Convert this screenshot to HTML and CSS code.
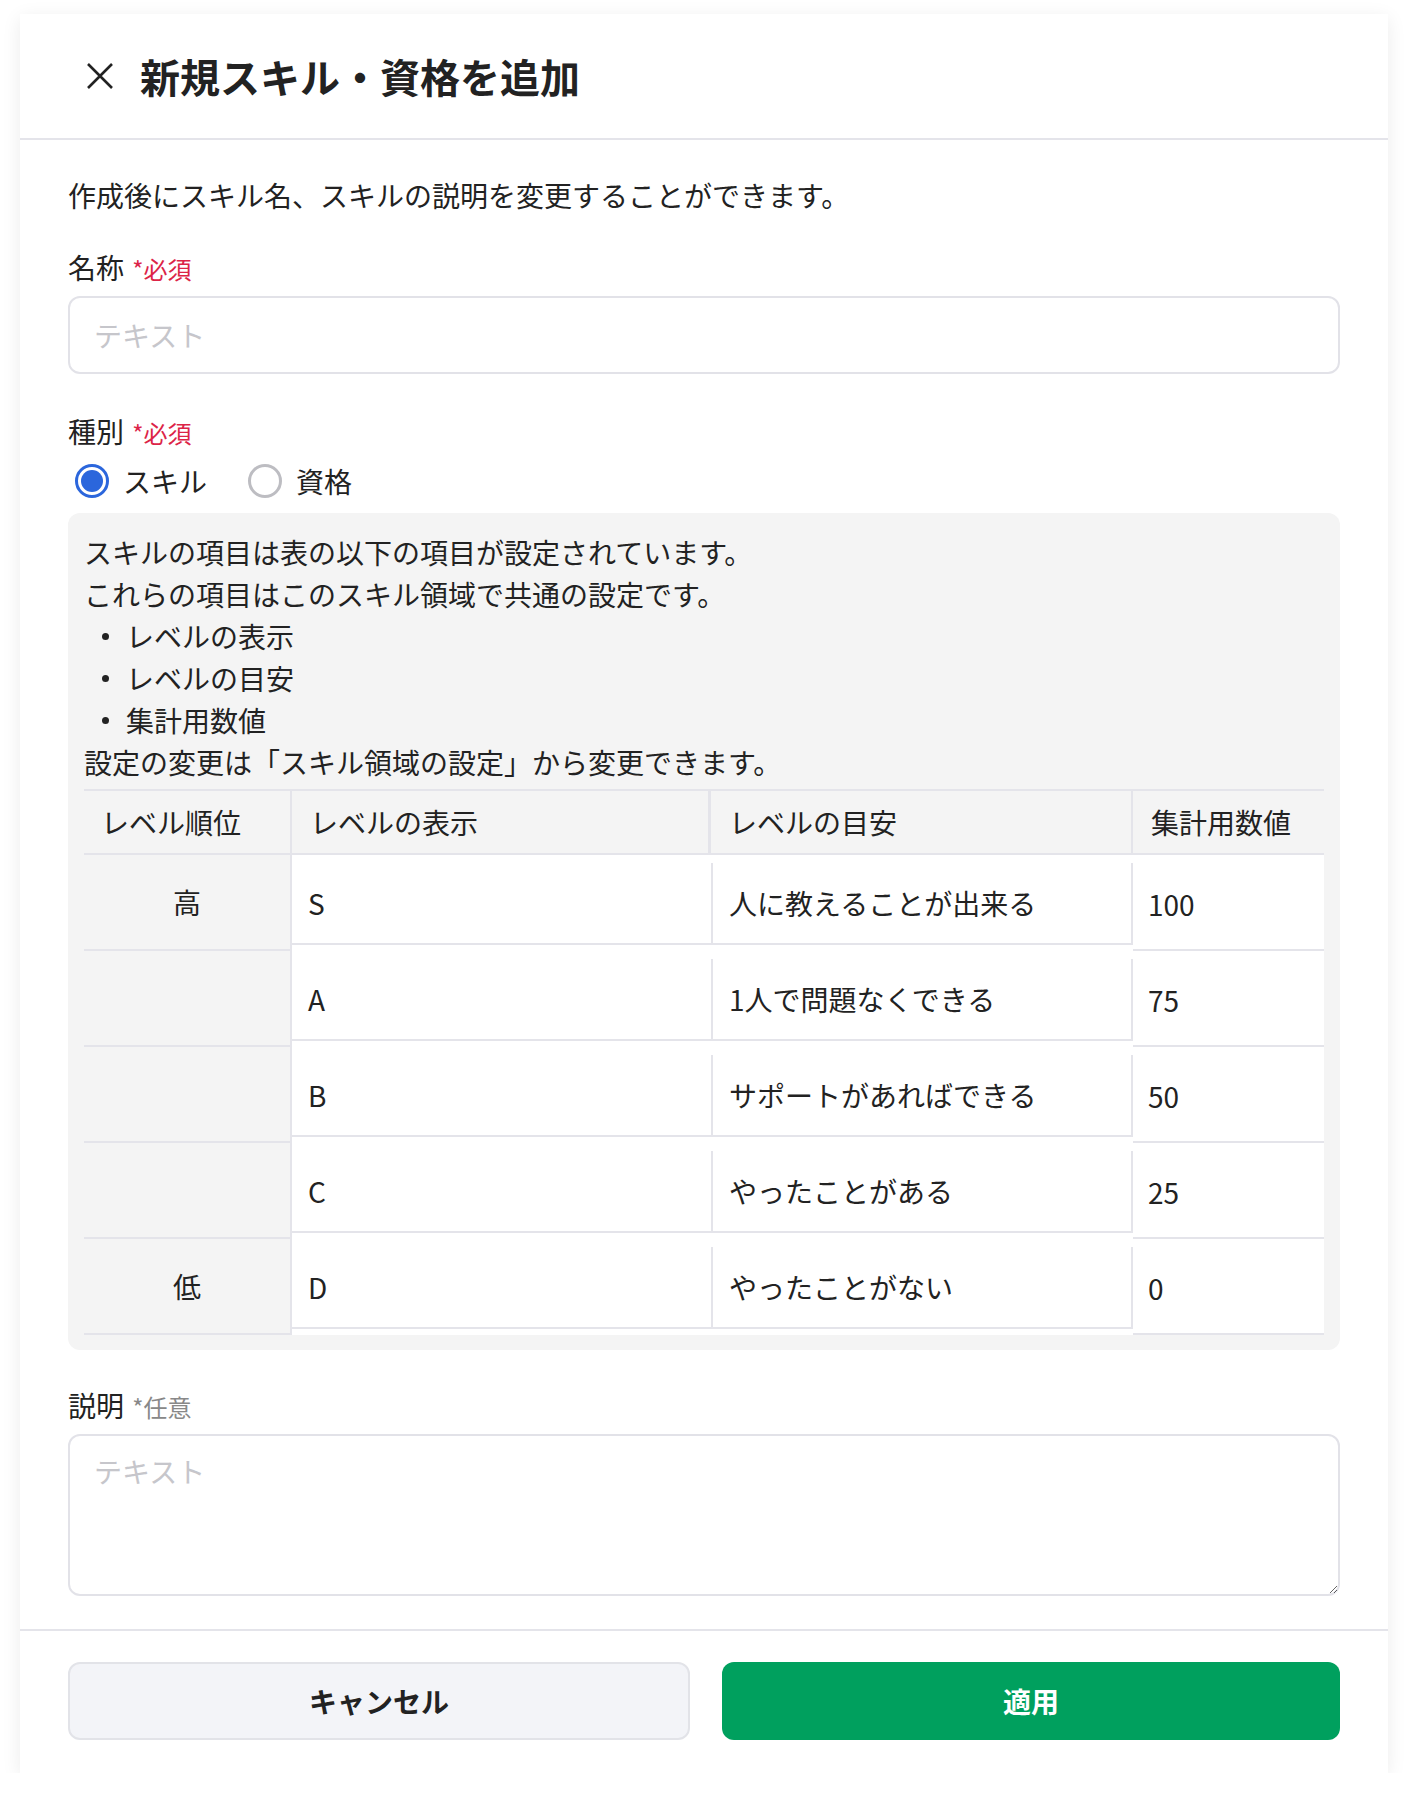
FILE: index.html
```html
<!DOCTYPE html>
<html lang="ja">
<head>
  <meta charset="UTF-8">
  <title>新規スキル・資格を追加</title>
  <link rel="stylesheet" href="styles.css">
</head>
<body>

  <div class="dialog">
    <div class="dialog-header">
      <button class="close-btn" aria-label="閉じる">
        <svg width="28" height="28" viewBox="0 0 28 28">
          <path d="M2 2 L26 26 M26 2 L2 26" stroke="#222" stroke-width="2.6" fill="none"/>
        </svg>
      </button>
      <h1>新規スキル・資格を追加</h1>
    </div>

    <div class="dialog-body">
      <p class="lead">作成後にスキル名、スキルの説明を変更することができます。</p>

      <label class="field-label label-name">名称 <span class="req">*必須</span></label>
      <input class="text-input" type="text" placeholder="テキスト">

      <label class="field-label label-kind">種別 <span class="req">*必須</span></label>
      <div class="radios">
        <label class="radio-opt"><span class="radio checked"></span>スキル</label>
        <label class="radio-opt"><span class="radio"></span>資格</label>
      </div>

      <div class="info-box">
        <p>スキルの項目は表の以下の項目が設定されています。<br>これらの項目はこのスキル領域で共通の設定です。</p>
        <ul>
          <li>レベルの表示</li>
          <li>レベルの目安</li>
          <li>集計用数値</li>
        </ul>
        <p>設定の変更は「スキル領域の設定」から変更できます。</p>

        <div class="level-table">
          <div class="th th-rank">レベル順位</div>
          <div class="th th-disp">レベルの表示</div>
          <div class="th th-guide">レベルの目安</div>
          <div class="th th-val">集計用数値</div>

          <div class="rank">高</div>
          <div class="disp"><div class="inner">S</div></div>
          <div class="guide"><div class="inner">人に教えることが出来る</div></div>
          <div class="val">100</div>

          <div class="rank"></div>
          <div class="disp"><div class="inner">A</div></div>
          <div class="guide"><div class="inner">1人で問題なくできる</div></div>
          <div class="val">75</div>

          <div class="rank"></div>
          <div class="disp"><div class="inner">B</div></div>
          <div class="guide"><div class="inner">サポートがあればできる</div></div>
          <div class="val">50</div>

          <div class="rank"></div>
          <div class="disp"><div class="inner">C</div></div>
          <div class="guide"><div class="inner">やったことがある</div></div>
          <div class="val">25</div>

          <div class="rank">低</div>
          <div class="disp"><div class="inner">D</div></div>
          <div class="guide"><div class="inner">やったことがない</div></div>
          <div class="val">0</div>
        </div>
      </div>

      <label class="field-label label-desc">説明 <span class="opt">*任意</span></label>
      <textarea class="text-area" placeholder="テキスト"></textarea>
    </div>

    <div class="dialog-footer">
      <button class="btn btn-cancel">キャンセル</button>
      <button class="btn btn-apply">適用</button>
    </div>
  </div>

</body>
</html>
```

FILE: styles.css
```css
body {
  margin: 0;
  background: #fff;
  color: #222;
  font-family: "Noto Sans CJK JP", "Noto Sans", sans-serif;
}

.dialog {
  margin: 14px 20px 0;
  background: #fff;
  box-shadow: 0 4px 18px rgba(0, 0, 0, 0.08);
}

.dialog-header {
  display: flex;
  align-items: center;
  height: 124px;
  padding: 0 48px;
  border-bottom: 2px solid #e4e4ea;
}

.close-btn {
  width: 64px;
  height: 64px;
  margin-right: 8px;
  padding: 0;
  border: none;
  background: none;
  display: flex;
  align-items: center;
  justify-content: center;
}

h1 {
  margin: 0;
  font-size: 40px;
  font-weight: 700;
  color: #222;
}

.dialog-body {
  display: flex;
  flex-direction: column;
  padding: 34px 48px 33px;
  font-size: 28px;
  line-height: 42px;
}

.lead {
  margin: 0;
}

.field-label {
  display: block;
  height: 42px;
  font-size: 28px;
  line-height: 42px;
}

.label-name { margin-top: 30px; }
.label-kind { margin-top: 36px; }
.label-desc { margin-top: 34px; }

.req,
.opt {
  margin-left: 2px;
  font-size: 24px;
  line-height: 1;
}

.req {
  color: #dc2447;
}

.opt {
  color: #888;
}

.text-input,
.text-area {
  box-sizing: border-box;
  width: 100%;
  margin-top: 8px;
  border: 2px solid #e2e2e8;
  border-radius: 12px;
  padding: 0 24px;
  font-family: inherit;
  font-size: 28px;
  color: #222;
  background: #fff;
}

.text-input {
  height: 78px;
}

.text-area {
  height: 162px;
  padding-top: 14px;
  line-height: 42px;
}

.text-input::placeholder,
.text-area::placeholder {
  color: #c6c6cb;
}

.radios {
  display: flex;
  align-items: center;
  gap: 41px;
  margin-top: 8px;
  height: 42px;
}

.radio-opt {
  display: flex;
  align-items: center;
  gap: 14px;
}

.radio {
  box-sizing: border-box;
  width: 34px;
  height: 34px;
  margin-left: 7px;
  border: 3px solid #bdbdc2;
  border-radius: 50%;
  display: flex;
  align-items: center;
  justify-content: center;
}

.radio.checked {
  border-color: #2b66dc;
}

.radio.checked::after {
  content: "";
  width: 22px;
  height: 22px;
  border-radius: 50%;
  background: #2b66dc;
}

.radio-opt + .radio-opt .radio {
  margin-left: 0;
}

.info-box {
  margin-top: 11px;
  padding: 18px 16px 15px;
  background: #f4f4f4;
  border-radius: 12px;
}

.info-box p {
  margin: 0;
}

.info-box ul {
  margin: 0;
  padding-left: 42px;
  list-style: none;
}

.info-box li {
  position: relative;
}

.info-box li::before {
  content: "";
  position: absolute;
  left: -24px;
  top: 18px;
  width: 7px;
  height: 7px;
  border-radius: 50%;
  background: #222;
}

.level-table {
  display: grid;
  grid-template-columns: 208px 419px 422px 191px;
  grid-template-rows: 64px;
  grid-auto-rows: 96px;
  margin-top: 6px;
  border-top: 2px solid #e4e4ea;
}

.level-table .th {
  box-sizing: border-box;
  padding: 0 18px;
  display: flex;
  align-items: center;
  border-bottom: 2px solid #e4e4ea;
}

.level-table .th-rank {
  padding-left: 17px;
}

.th-rank,
.th-disp,
.th-guide {
  border-right: 2px solid #e4e4ea;
}

.th-disp {
  border-right-width: 3px;
}

.rank {
  box-sizing: border-box;
  display: flex;
  align-items: center;
  justify-content: center;
  border-right: 2px solid #e4e4ea;
  border-bottom: 2px solid #e4e4ea;
}

.disp,
.guide {
  background: #fff;
  padding: 8px 0 6px;
  box-sizing: border-box;
}

.inner {
  box-sizing: border-box;
  height: 100%;
  display: flex;
  align-items: center;
  padding: 0 16px;
  border-bottom: 2px solid #e4e4ea;
}

.guide .inner {
  border-left: 2px solid #e4e4ea;
  border-right: 2px solid #e4e4ea;
}

.val {
  box-sizing: border-box;
  background: #fff;
  display: flex;
  align-items: center;
  padding: 4px 15px 0;
  border-bottom: 2px solid #e4e4ea;
}

.dialog-footer {
  display: flex;
  gap: 32px;
  padding: 31px 48px 33px;
  border-top: 2px solid #e4e4ea;
}

.btn {
  flex: 1;
  height: 78px;
  border-radius: 12px;
  font-family: inherit;
  font-size: 28px;
  font-weight: 700;
  cursor: pointer;
}

.btn-cancel {
  background: #f3f4f8;
  border: 2px solid #e2e3e8;
  color: #222;
}

.btn-apply {
  background: #00a05e;
  border: none;
  color: #fff;
}
```
